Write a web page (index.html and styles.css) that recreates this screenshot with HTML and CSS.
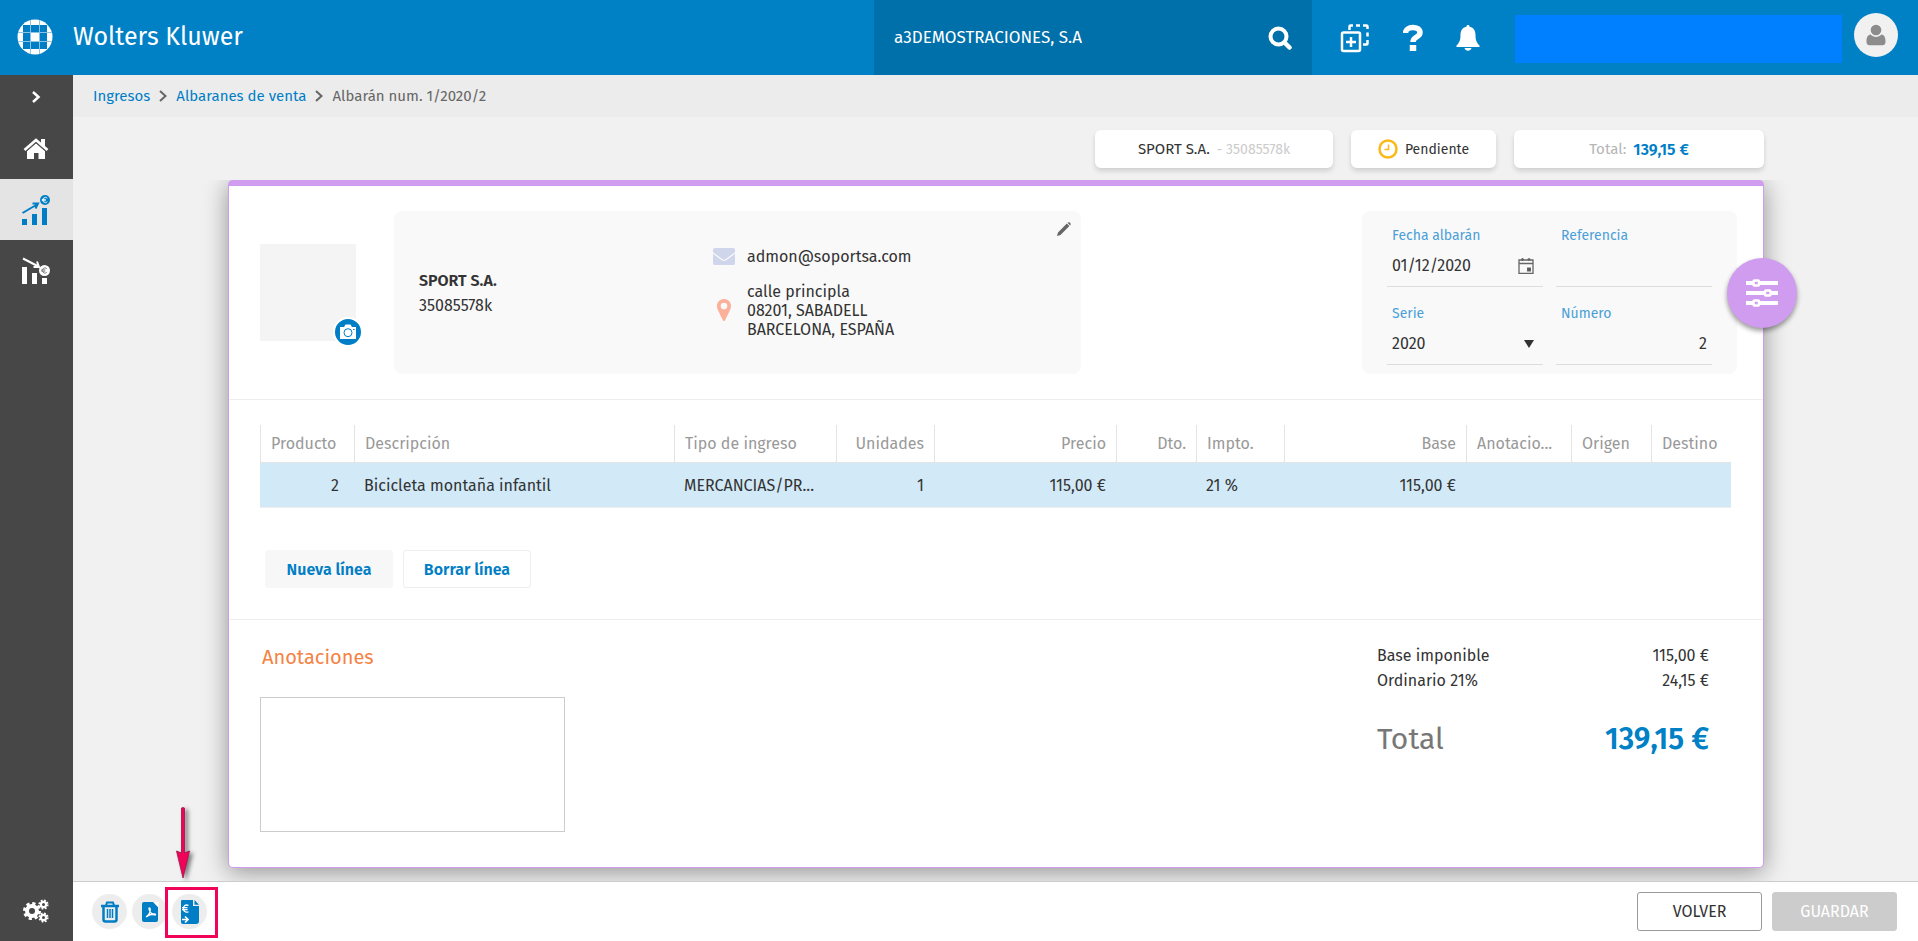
FILE: index.html
```html
<!DOCTYPE html>
<html lang="es">
  <head>
    <meta charset="UTF-8" />
    <title>Albarán num. 1/2020/2</title>
    <meta name="viewport" content="width=device-width, initial-scale=1.0" />
    <link rel="stylesheet" href="styles.css">
  </head>
  <body>
    <header class="topbar">
      <svg class="logo" viewBox="0 0 36 36" width="36" height="36">
        <defs>
          <clipPath id="globe"><circle cx="18" cy="18" r="17.5" /></clipPath>
        </defs>
        <g clip-path="url(#globe)">
          <rect width="36" height="36" fill="#fff" />
          <path fill="#007ec5" d="M6 6h7v7H6zM14 6h8v7h-8zM23 6h7v7h-7zM6 14h7v8H6zM23 14h7v8h-7zM6 23h7v7H6zM14 23h8v7h-8zM23 23h7v7h-7z" />
          <path stroke="#8cc4e4" stroke-width="1" d="M13.5 1v34M22.500 1v34M1 13.500h34M1 22.500h34" />
          <rect x="14" y="14" width="8" height="8" fill="#fff" />
        </g>
      </svg>
      <span class="brand">Wolters Kluwer</span>

      <div class="company-search">
        <input type="text" id="company" aria-label="Empresa" value="a3DEMOSTRACIONES, S.A" />
        <button class="icon-btn" aria-label="Buscar">
          <svg viewBox="0 0 24 24" width="24" height="24" fill="none" stroke="#fff">
            <circle cx="10.500" cy="10.500" r="8" stroke-width="4" />
            <path d="M16.500 16.500l5 5" stroke-width="4.500" stroke-linecap="round" />
          </svg>
        </button>
      </div>

      <nav class="top-icons">
        <button class="icon-btn" aria-label="Nuevo">
          <svg viewBox="0 0 30 30" width="30" height="30" fill="none" stroke="#fff">
            <rect x="2" y="9.500" width="18" height="18.500" rx="1.500" stroke-width="2.500" />
            <path d="M11 14v10M6 19h10" stroke-width="2.500" />
            <path d="M9.500 7V3.500q0-1 1-1H13M16 2.500h4M23 2.500h3.500q1 0 1 1V6M27.500 9.500v4M27.500 17v3.500q0 1-1 1H23" stroke-width="2.500" />
          </svg>
        </button>
        <button class="icon-btn" aria-label="Ayuda">
          <svg viewBox="0 0 20 28" width="20" height="28" fill="none" stroke="#fff">
            <path d="M2.500 9C2.500 2 17 1.500 17 8.500c0 5-7 4-7 9.500" stroke-width="5.500" />
            <path d="M10 21v6" stroke-width="6.500" />
          </svg>
        </button>
        <button class="icon-btn" aria-label="Avisos">
          <svg viewBox="0 0 24 28" width="24" height="28" fill="#fff">
            <path d="M12 1c1 0 1.500.700 1.600 1.700C18 3.600 19.500 7 19.500 11c0 5 1 7.500 4 10.500V23H.500v-1.500c3-3 4-5.500 4-10.500 0-4 1.500-7.400 5.900-8.300C10.500 1.700 11 1 12 1zM8.500 24h7c-.5 1.800-1.900 2.700-3.500 2.700S9 25.800 8.500 24z" />
          </svg>
        </button>
      </nav>

      <div class="user-name"></div>
      <button class="avatar" aria-label="Usuario">
        <svg viewBox="0 0 20 22" width="20" height="22" fill="#8c8c8c">
          <circle cx="10" cy="6" r="5.300" />
          <path d="M4.500 10.500C6 12 8 13 10 13s4-1 5.500-2.500c3 .5 4 3 4 7 0 2.500-1 3.700-3 3.700h-13c-2 0-3-1.200-3-3.700 0-4 1-6.500 4-7z" />
        </svg>
      </button>
    </header>

    <div class="layout">
      <aside class="sidebar">
        <button class="side-item side-toggle" aria-label="Desplegar">
          <svg viewBox="0 0 10 14" width="10" height="14" fill="none" stroke="#fff" stroke-width="2.500"><path d="M2 2l5.500 5L2 12" /></svg>
        </button>
        <a class="side-item side-home" href="#" aria-label="Inicio">
          <svg viewBox="0 0 26 22" width="26" height="22">
            <path fill="#fff" d="M4 13l9-8 9 8v8h-6.500v-6h-4.500v6H4z" />
            <path d="M1.500 12L13 2l11.500 10" fill="none" stroke="#fff" stroke-width="2.800" />
            <path fill="#fff" d="M18 1h4v8l-4-3.500z" />
            <path d="M3.500 13.200L13 5l9.500 8.200" fill="none" stroke="#474747" stroke-width=".8" />
          </svg>
        </a>
        <a class="side-item active" href="#" aria-label="Ingresos">
          <svg viewBox="0 0 30 32" width="30" height="32" fill="#007ec5">
            <path d="M1 25h5v6H1zM11 20h5v11h-5zM21 14h5v17h-5z" />
            <path d="M1.500 19L16 10.500M11.500 9.500h5.500l-2.500 5" fill="none" stroke="#007ec5" stroke-width="2" />
            <circle cx="24" cy="6" r="5" />
            <path d="M26.300 4.200a2.600 2.600 0 1 0 0 3.600M20.800 5.400h4M20.800 6.700h4" fill="none" stroke="#fff" stroke-width=".9" />
          </svg>
        </a>
        <a class="side-item" href="#" aria-label="Gastos">
          <svg viewBox="0 0 30 30" width="30" height="30" fill="#fff">
            <path d="M1 11h5v17H1zM11 17h5v11h-5zM21 22h5v6h-5z" />
            <path d="M2 2.500l15.500 8M12.500 11h5.500l-2-5.500" fill="none" stroke="#fff" stroke-width="2" />
            <circle cx="23.500" cy="14.500" r="5.500" />
            <path d="M25.800 12.700a2.600 2.600 0 1 0 0 3.600M20.300 13.900h4M20.300 15.200h4" fill="none" stroke="#777" stroke-width=".9" />
          </svg>
        </a>
        <a class="side-item side-config" href="#" aria-label="Configuración">
          <svg viewBox="0 0 26 24" width="26" height="24" fill="none" stroke="#fff">
            <circle cx="9" cy="12" r="5" stroke-width="4" />
            <circle cx="9" cy="12" r="7.500" stroke-width="3" stroke-dasharray="3.200 2.690" />
            <circle cx="20.500" cy="5.500" r="2.600" stroke-width="2.200" />
            <circle cx="20.500" cy="5.500" r="4.200" stroke-width="1.800" stroke-dasharray="1.800 1.500" />
            <circle cx="20.500" cy="18.500" r="2.600" stroke-width="2.200" />
            <circle cx="20.500" cy="18.500" r="4.200" stroke-width="1.800" stroke-dasharray="1.800 1.500" />
          </svg>
        </a>
      </aside>

      <main class="main">
        <nav class="breadcrumb">
          <a href="#">Ingresos</a>
          <svg viewBox="0 0 8 12" width="8" height="12"><path d="M1 1l5.500 5L1 11" /></svg>
          <a href="#">Albaranes de venta</a>
          <svg viewBox="0 0 8 12" width="8" height="12"><path d="M1 1l5.500 5L1 11" /></svg>
          <span>Albarán num. 1/2020/2</span>
        </nav>

        <div class="summary">
          <div class="pill pill-customer">SPORT S.A. <span class="muted">- 35085578k</span></div>
          <div class="pill pill-status">
            <svg viewBox="0 0 20 20" width="20" height="20" fill="none" stroke="#fbb917">
              <circle cx="10" cy="10" r="8.500" stroke-width="2.500" />
              <path d="M10.500 5.500v5H6.500" stroke-width="1.500" />
            </svg>
            Pendiente
          </div>
          <div class="pill pill-total"><span class="muted-dark">Total:</span> <strong>139,15 €</strong></div>
        </div>

        <div class="doc-area">
          <section class="doc">
            <div class="doc-head">
              <div class="photo">
                <button class="photo-btn" aria-label="Cambiar logo">
                  <svg viewBox="0 0 18 16" width="18" height="16">
                    <path fill="#fff" d="M1 3h4l1.500-2.500h5L13 3h4v12H1z" />
                    <circle cx="9" cy="8.700" r="4" fill="none" stroke="#007ec5" />
                    <path stroke="#007ec5" d="M14 5.500h1.500" />
                  </svg>
                </button>
              </div>

              <div class="customer">
                <div class="customer-id">
                  <strong>SPORT S.A.</strong>
                  <span>35085578k</span>
                </div>
                <div class="customer-contact">
                  <div class="contact-row">
                    <svg viewBox="0 0 22 17" width="22" height="17" fill="#cfd5ea">
                      <path d="M2 0h18q2 0 2 2v2.200l-9.500 7q-1.500 1-3 0L0 4.200V2q0-2 2-2z" />
                      <path d="M0 5.800l8.700 6.400q2.300 1.500 4.600 0L22 5.800V15q0 2-2 2H2q-2 0-2-2z" />
                    </svg>
                    <span>admon@soportsa.com</span>
                  </div>
                  <div class="contact-row">
                    <svg viewBox="0 0 22 22" width="22" height="22" fill="#fbb09a">
                      <path fill-rule="evenodd" d="M11 0c4 0 7 3 7 7 0 3-1.500 5-6 14.500q-1 1-2 0C5.500 12 4 10 4 7c0-4 3-7 7-7zm0 3.800a3.300 3.300 0 1 0 0 6.600 3.300 3.300 0 0 0 0-6.600z" />
                    </svg>
                    <address>calle principla<br />08201, SABADELL<br />BARCELONA, ESPAÑA</address>
                  </div>
                </div>
                <button class="edit-btn" aria-label="Editar cliente">
                  <svg viewBox="0 0 16 16" width="16" height="16" fill="#666"><path d="M1 15l1-3.500L10.800 2.500l2.600 2.600L4.500 14zM11.500 1.800q1.200-1.200 2.300-.2l.5.500q1 1.200-.2 2.300z" /></svg>
                </button>
              </div>

              <div class="fields">
                <div class="field">
                  <label for="fecha">Fecha albarán</label>
                  <div class="field-control">
                    <input type="text" id="fecha" value="01/12/2020" />
                    <svg viewBox="0 0 16 16" width="16" height="16" fill="none" stroke="#666">
                      <path d="M1 2h14v13.300H1zM1 5.500h14" stroke-width="1.300" />
                      <path d="M4.500 0v3M11 0v3M3 1.500h3M9.500 1.500h3" stroke-width="1.300" />
                      <rect x="9.500" y="10" width="3" height="3" fill="#555" />
                    </svg>
                  </div>
                </div>
                <div class="field">
                  <label for="referencia">Referencia</label>
                  <div class="field-control"><input type="text" id="referencia" /></div>
                </div>
                <div class="field">
                  <label for="serie">Serie</label>
                  <div class="field-control">
                    <select id="serie">
                      <option>2020</option>
                    </select>
                    <svg class="caret" viewBox="0 0 10 8" width="10" height="8" fill="#333"><path d="M0 0h10L5 8z" /></svg>
                  </div>
                </div>
                <div class="field">
                  <label for="numero">Número</label>
                  <div class="field-control"><input type="text" class="num" id="numero" value="2" /></div>
                </div>
              </div>

              <button class="fab" aria-label="Opciones">
                <svg viewBox="0 0 32 28" width="32" height="28" fill="none" stroke="#fff">
                  <path d="M0 4h7M13 4h19M0 14h18M25 14h7M0 24h7M13 24h19" stroke-width="4" />
                  <rect x="7.500" y="1.500" width="5.500" height="5" rx="1" stroke-width="2.500" />
                  <rect x="19" y="11.500" width="5.500" height="5" rx="1" stroke-width="2.500" />
                  <rect x="7.500" y="21.500" width="5.500" height="5" rx="1" stroke-width="2.500" />
                </svg>
              </button>
            </div>

            <div class="doc-lines">
              <table>
                <colgroup>
                  <col class="c-producto" /><col /><col class="c-tipo" /><col class="c-unidades" />
                  <col class="c-importe" /><col class="c-corta" /><col class="c-impto" /><col class="c-importe" />
                  <col class="c-anota" /><col class="c-corta" /><col class="c-corta" />
                </colgroup>
                <thead>
                  <tr>
                    <th>Producto</th>
                    <th>Descripción</th>
                    <th>Tipo de ingreso</th>
                    <th class="num">Unidades</th>
                    <th class="num">Precio</th>
                    <th class="num">Dto.</th>
                    <th>Impto.</th>
                    <th class="num">Base</th>
                    <th>Anotacio...</th>
                    <th>Origen</th>
                    <th>Destino</th>
                  </tr>
                </thead>
                <tbody>
                  <tr>
                    <td class="num code">2</td>
                    <td>Bicicleta montaña infantil</td>
                    <td>MERCANCIAS/PR...</td>
                    <td class="num">1</td>
                    <td class="num">115,00 €</td>
                    <td></td>
                    <td>21 %</td>
                    <td class="num">115,00 €</td>
                    <td></td>
                    <td></td>
                    <td></td>
                  </tr>
                </tbody>
              </table>
              <div class="line-actions">
                <button class="line-btn filled">Nueva línea</button>
                <button class="line-btn">Borrar línea</button>
              </div>
            </div>

            <div class="doc-foot">
              <div class="notes">
                <label for="anotaciones">Anotaciones</label>
                <textarea id="anotaciones"></textarea>
              </div>
              <div class="totals">
                <div class="total-row"><span>Base imponible</span><span>115,00 €</span></div>
                <div class="total-row"><span>Ordinario 21%</span><span>24,15 €</span></div>
                <div class="total-row grand"><span>Total</span><strong>139,15 €</strong></div>
              </div>
            </div>
          </section>
        </div>

        <footer class="actions">
          <button class="round-btn" aria-label="Eliminar">
            <svg viewBox="0 0 20 22" width="20" height="22" fill="none" stroke="#007ec5">
              <path d="M1 5h18" stroke-width="2.500" />
              <path d="M6 4.500l1-3h6l1 3" stroke-width="2" />
              <path d="M3.500 5v13.500q0 2 2 2h9q2 0 2-2V5" stroke-width="2.500" />
              <path d="M7.500 8v9M10 8v9M12.500 8v9" stroke-width="1.500" />
            </svg>
          </button>
          <button class="round-btn" aria-label="PDF">
            <svg viewBox="0 0 18 22" width="18" height="22">
              <path fill="#007ec5" d="M3 1h9l5 5v13q0 2-2 2H3q-2 0-2-2V3q0-2 2-2z" />
              <path fill="#fff" d="M12.500 1l5 5.500V1z" />
              <path fill="none" stroke="#fff" stroke-width="1.300" d="M5 16c3-2 4.500-5.500 4.200-8-.1-1.500-1.400-1.500-1.200 0 .4 3 3 5.800 6 6 .8 0 .8-1-.5-1-3 .1-6 1-8.500 3z" />
            </svg>
          </button>
          <button class="round-btn" aria-label="Facturar">
            <svg viewBox="0 0 20 24" width="20" height="24">
              <path fill="#007ec5" d="M2 0h11v6h6v15q0 3-3 3H3q-2 0-2-2V1q0-1 1-1z" />
              <path fill="#007ec5" d="M14.500 0L19 4.700h-4.500z" />
              <path fill="none" stroke="#fff" stroke-width="1.300" d="M8.500 5.300Q3.500 4 3.500 8.500t5 3.300M2 7.700h5.500M2 9.700h5.500" />
              <path fill="none" stroke="#fff" stroke-width="1.700" d="M2 19.500h6M5 16.500l3 3-3 3" />
            </svg>
            <span class="callout">
              <svg class="callout-arrow" viewBox="0 0 26 76" width="26" height="76">
                <path fill="#f0045a" stroke="#a01048" stroke-width=".8" d="M11.500 2q1.500-1 3 0v45l5-2L13 72 6.500 45l5 2z" />
              </svg>
            </span>
          </button>
          <div class="action-btns">
            <button class="btn">VOLVER</button>
            <button class="btn btn-off" disabled>GUARDAR</button>
          </div>
        </footer>
      </main>
    </div>
  </body>
</html>
```

FILE: styles.css
```css
* {
  box-sizing: border-box;
}

body {
  margin: 0;
  min-height: 100vh;
  display: flex;
  flex-direction: column;
  font-family: "Fira Sans", "Noto Sans", sans-serif;
  font-size: 16px;
  line-height: 19px;
  color: #333;
  background: #f1f1f1;
}

button,
input,
select,
textarea {
  font: inherit;
  color: inherit;
  padding: 0;
  border: none;
  background: none;
}

button {
  display: flex;
  align-items: center;
  justify-content: center;
  cursor: pointer;
}

svg {
  display: block;
  flex: none;
}

a {
  color: #007ec5;
  text-decoration: none;
}

/* top bar */
.topbar {
  display: flex;
  height: 75px;
  background: #0081c6;
  color: #fff;
}

.logo {
  margin: 19px 20px 0 17px;
}

.brand {
  font-size: 25px;
  line-height: 74px;
}

.company-search {
  display: flex;
  align-items: center;
  width: 438px;
  margin-left: auto;
  padding: 0 20px;
  background: #0070aa;
}

.company-search input {
  flex: 1;
  min-width: 0;
  font-size: 17px;
}

.top-icons {
  display: flex;
  align-items: center;
  gap: 33px;
  margin: 0 35px 0 28px;
}

.user-name {
  width: 327px;
  height: 48px;
  margin-top: 15px;
  background: #0080ff;
}

.avatar {
  width: 44px;
  height: 44px;
  margin: 13px 20px 0 12px;
  border-radius: 50%;
  background: #f1f1f1;
}

/* sidebar */
.layout {
  flex: 1;
  display: flex;
}

.sidebar {
  display: flex;
  flex-direction: column;
  width: 73px;
  background: #474747;
}

.side-item {
  display: flex;
  align-items: center;
  justify-content: center;
  height: 61px;
  padding-right: 2px;
}

.side-toggle {
  height: 44px;
}

.side-home {
  height: 60px;
}

.side-item.active {
  background: #e4e4e4;
}

.side-config {
  margin-top: auto;
}

.main {
  flex: 1;
  min-width: 0;
  display: flex;
  flex-direction: column;
}

.breadcrumb {
  display: flex;
  align-items: center;
  gap: 9px;
  height: 42px;
  padding: 0 20px;
  background: #ececec;
  color: #666;
  font-size: 15px;
}

.breadcrumb svg {
  fill: none;
  stroke: #666;
  stroke-width: 2;
}

/* summary pills */
.summary {
  display: flex;
  justify-content: flex-end;
  gap: 18px;
  padding: 13px 154px 12px;
}

.pill {
  display: flex;
  align-items: center;
  justify-content: center;
  gap: 7px;
  height: 38px;
  border-radius: 6px;
  background: #fff;
  box-shadow: 0 3px 5px rgba(0, 0, 0, 0.14);
  font-size: 15px;
}

.pill-customer {
  width: 238px;
}

.pill-status {
  width: 145px;
  font-size: 14px;
}

.pill-total {
  width: 250px;
}

.pill strong {
  color: #007ec5;
  font-size: 16px;
  font-weight: 600;
}

.muted {
  color: #ccc;
  font-size: 14px;
}

.muted-dark {
  color: #b5b5b5;
}

/* document */
.doc-area {
  flex: 1;
  display: flex;
  padding: 0 154px 13px 155px;
  overflow: hidden;
}

.doc {
  flex: 1;
  min-width: 0;
  border: 1px solid #d09cf0;
  border-top-width: 6px;
  border-radius: 5px;
  background: #fff;
  box-shadow: 0 4px 24px rgba(0, 0, 0, 0.4);
}

.doc-head {
  position: relative;
  display: flex;
  padding: 25px 26px 25px 31px;
  border-bottom: 1px solid #eee;
}

.photo {
  position: relative;
  width: 96px;
  height: 97px;
  margin: 33px 38px 0 0;
  background: #f4f4f4;
}

.photo-btn {
  position: absolute;
  right: -7px;
  bottom: -6px;
  width: 30px;
  height: 30px;
  border: 2px solid #fff;
  border-radius: 50%;
  background: #007ec5;
}

.customer {
  position: relative;
  display: flex;
  align-items: center;
  width: 687px;
  height: 163px;
  padding: 0 25px;
  border-radius: 8px;
  background: #f9f9f9;
}

.customer-id {
  display: flex;
  flex-direction: column;
  gap: 6px;
  width: 294px;
}

.customer strong {
  font-weight: 600;
}

.customer-contact {
  display: flex;
  flex-direction: column;
  gap: 16px;
}

.contact-row {
  display: flex;
  align-items: center;
  gap: 12px;
}

address {
  font-style: normal;
}

.edit-btn {
  position: absolute;
  top: 10px;
  right: 9px;
}

.fields {
  display: grid;
  grid-template-columns: repeat(2, minmax(0, 1fr));
  gap: 17px 13px;
  width: 375px;
  height: 163px;
  margin-left: auto;
  padding: 15px 25px 9px;
  border-radius: 8px;
  background: #f9f9f9;
}

.field label {
  display: block;
  padding-left: 5px;
  color: #4a9fd8;
  font-size: 14px;
}

.field-control {
  display: flex;
  align-items: center;
  height: 42px;
  padding: 0 9px 0 5px;
  border-bottom: 1px solid #ddd;
}

.field-control input,
.field-control select {
  flex: 1;
  min-width: 0;
  appearance: none;
}

.num {
  text-align: right;
}

.field-control .num {
  margin-right: -4px;
}

.fab {
  position: absolute;
  top: 72px;
  right: -34px;
  width: 70px;
  height: 70px;
  border-radius: 50%;
  background: #d09cf0;
  box-shadow: 0 3px 5px rgba(0, 0, 0, 0.4);
}

/* lines */
.doc-lines {
  padding: 25px 32px 31px 31px;
  border-bottom: 1px solid #eee;
}

table {
  width: 100%;
  table-layout: fixed;
  border-collapse: separate;
  border-spacing: 0;
}

.c-producto {
  width: 94px;
}

.c-tipo {
  width: 162px;
}

.c-unidades {
  width: 98px;
}

.c-importe {
  width: 182px;
}

.c-corta {
  width: 80px;
}

.c-impto {
  width: 88px;
}

.c-anota {
  width: 105px;
}

th,
td {
  padding: 0 10px;
  overflow: hidden;
  white-space: nowrap;
}

th {
  height: 38px;
  border-left: 1px solid #e4e4e4;
  border-bottom: 1px solid #e4e4e4;
  color: #999;
  font-weight: 400;
  text-align: left;
}

th.num {
  text-align: right;
}

td {
  height: 45px;
  border-bottom: 1px solid #eee;
  background: #d2eaf8;
}

td.code {
  padding-right: 15px;
}

.line-actions {
  display: flex;
  gap: 10px;
  margin: 42px 5px 0;
}

.line-btn {
  width: 128px;
  height: 38px;
  border: 1px solid #eee;
  border-radius: 3px;
  color: #007ec5;
  font-weight: 600;
}

.line-btn.filled {
  background: #f7f7f7;
  border-color: #f7f7f7;
}

/* notes and totals */
.doc-foot {
  display: flex;
  justify-content: space-between;
  padding: 23px 54px 34px 31px;
}

.notes label {
  display: block;
  padding-left: 2px;
  color: #f58345;
  font-size: 20px;
  line-height: 28px;
}

.notes textarea {
  display: block;
  width: 305px;
  height: 135px;
  margin-top: 26px;
  border: 1px solid #ccc;
  resize: none;
}

.totals {
  width: 332px;
}

.total-row {
  display: flex;
  justify-content: space-between;
  line-height: 25px;
}

.grand {
  margin-top: 26px;
  color: #777;
  font-size: 30px;
  line-height: 40px;
}

.grand strong {
  color: #0081c6;
  font-weight: 600;
}

/* bottom bar */
.actions {
  display: flex;
  align-items: center;
  gap: 5px;
  height: 60px;
  padding: 0 21px 0 19px;
  border-top: 1px solid #ccc;
  background: #fff;
}

.round-btn {
  position: relative;
  width: 35px;
  height: 35px;
  border-radius: 50%;
  background: #ededed;
}

.callout {
  position: absolute;
  top: -7px;
  left: -7px;
  width: 53px;
  height: 51px;
  border: 3px solid #f0045a;
}

.callout-arrow {
  position: absolute;
  bottom: 53px;
  left: 2px;
  filter: drop-shadow(3px 2px 2px rgba(0, 0, 0, 0.5));
}

.action-btns {
  display: flex;
  gap: 10px;
  margin-left: auto;
}

.btn {
  width: 125px;
  height: 39px;
  border: 1px solid #999;
  border-radius: 3px;
}

.btn-off {
  border-color: #ccc;
  background: #ccc;
  color: #fff;
}
```
